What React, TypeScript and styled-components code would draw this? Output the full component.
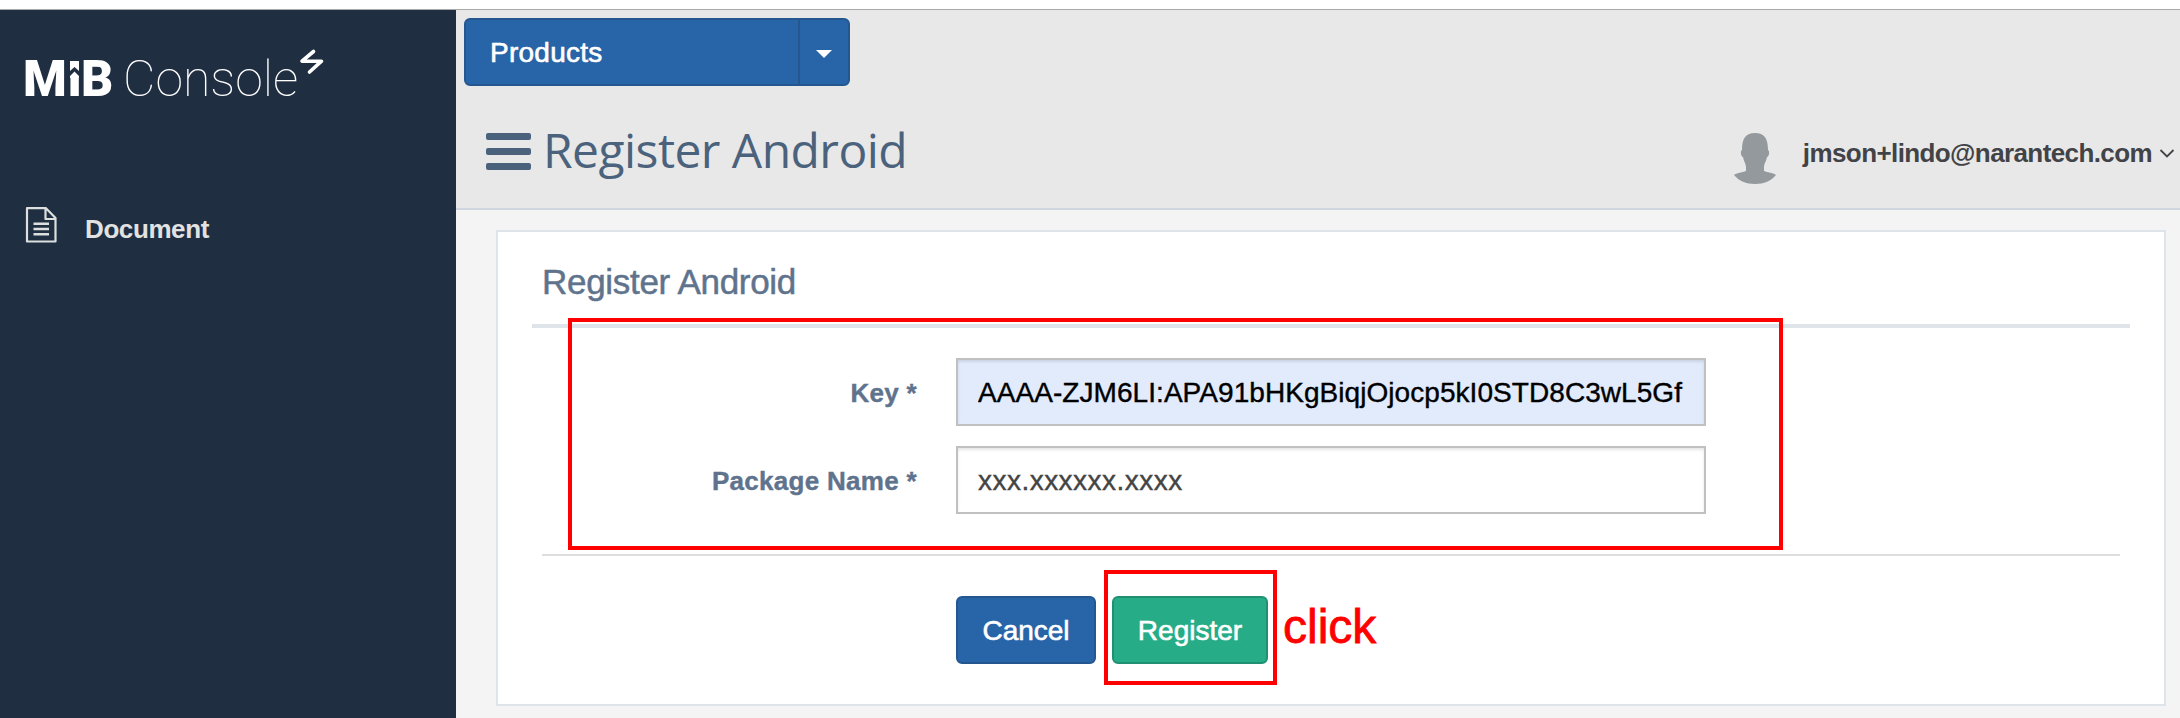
import React from 'react';
import styled, { createGlobalStyle, css } from 'styled-components';

const GlobalStyle = createGlobalStyle`
  * { box-sizing: border-box; }
  body {
    margin: 0;
    background: #fff;
    font-family: "Liberation Sans", Arial, sans-serif;
  }
`;

const Page = styled.div`
  height: 718px;
  display: flex;
  flex-direction: column;
  overflow: hidden;
`;
const BrowserEdge = styled.div`
  flex: none;
  height: 10px;
  border-bottom: 1px solid #a9a9a9;
`;
const Shell = styled.div`
  flex: 1;
  display: flex;
  min-height: 0;
`;

const Sidebar = styled.aside`
  width: 456px;
  background: #1f2e41;
  padding: 38px 0 0 23px;
`;
const Brand = styled.div`
  display: flex;
  align-items: flex-start;
  height: 159px;
  color: #fff;
  font-family: Roboto, sans-serif;
  font-size: 50px;
  line-height: 59px;
  white-space: nowrap;
`;
const BrandBold = styled.span`
  display: flex;
  width: 100px;
  padding-top: 2px;
  font-weight: 900;
`;
const BrandInitial = styled.span`
  width: 46px;
`;
const BrandArrowLetter = styled.span`
  position: relative;
  display: flex;
  justify-content: center;
  width: 11px;
`;
const ArrowCap = styled.svg`
  position: absolute;
  left: -1px;
  top: 8px;
`;
const BrandLast = styled.span`
  margin-left: 1px;
`;
const BrandThin = styled.span`
  width: 175px;
  padding-top: 2px;
  font-weight: 100;
`;
const NavItem = styled.a`
  display: flex;
  align-items: flex-start;
  gap: 28px;
  margin-left: 2px;
  color: #e2e2e2;
  font-size: 26px;
  font-weight: 700;
  line-height: 30px;
  letter-spacing: -0.4px;
`;
const NavText = styled.span`
  padding-top: 7px;
`;

const Main = styled.main`
  flex: 1;
  background: #f4f4f4;
`;
const Header = styled.header`
  height: 200px;
  padding: 8px 0 0 8px;
  background: #e8e8e8;
  border-bottom: 2px solid #d0d6df;
`;

const buttonBase = css`
  height: 68px;
  border: 2px solid #24568f;
  background: #2864a8;
  color: #fff;
  font-family: inherit;
  font-size: 28px;
  line-height: 32px;
  -webkit-text-stroke: 0.6px #fff;
`;
const SplitButton = styled.div`
  display: flex;
`;
const SplitLabel = styled.button`
  ${buttonBase}
  width: 336px;
  padding: 2px 0 0 24px;
  text-align: left;
  letter-spacing: 0.25px;
  border-radius: 6px 0 0 6px;
`;
const SplitToggle = styled.button`
  ${buttonBase}
  width: 52px;
  margin-left: -2px;
  padding: 0;
  display: flex;
  align-items: center;
  justify-content: center;
  border-radius: 0 6px 6px 0;
`;
const Caret = styled.span`
  margin-top: 3px;
  border: 8px solid transparent;
  border-top-color: #fff;
  border-bottom: 0;
`;

const TitleBar = styled.div`
  display: flex;
  justify-content: space-between;
  padding: 32px 5px 0 22px;
`;
const TitleGroup = styled.div`
  display: flex;
`;
const MenuBars = styled.div`
  display: flex;
  flex-direction: column;
  gap: 8px;
  width: 45px;
  margin: 15px 12px 0 0;
`;
const Bar = styled.i`
  height: 7px;
  border-radius: 2px;
  background: #4b627d;
`;
const PageTitle = styled.h1`
  margin: -1px 0 0;
  color: #4b627d;
  font-family: "Open Sans", sans-serif;
  font-size: 48px;
  font-weight: 400;
  line-height: 66px;
  letter-spacing: -0.55px;
`;
const User = styled.div`
  display: flex;
  align-items: flex-start;
  color: #424347;
  font-size: 26px;
  font-weight: 700;
  line-height: 30px;
  letter-spacing: -0.6px;
`;
const Email = styled.span`
  margin: 20px 7px 0 27px;
`;
const Chevron = styled.svg`
  margin-top: 30px;
`;
const Avatar = styled.svg`
  margin-top: 15px;
`;

const Card = styled.section`
  position: relative;
  width: 1670px;
  height: 476px;
  margin: 20px 0 0 40px;
  border: 2px solid #dfe3ea;
  background: #fff;
  padding: 0 34px;
`;
const CardTitle = styled.h2`
  height: 96px;
  margin: 0;
  padding: 30px 0 0 10px;
  border-bottom: 4px solid #dfe3ea;
  color: #60738d;
  font-size: 35px;
  font-weight: 400;
  line-height: 40px;
  letter-spacing: -0.3px;
  -webkit-text-stroke: 0.5px #60738d;
`;
const Form = styled.form`
  display: flex;
  flex-direction: column;
  gap: 20px;
  margin: 0 10px;
  padding: 30px 0 40px;
  border-bottom: 2px solid #dedede;
`;
const Field = styled.label`
  display: flex;
  align-items: center;
`;
const FieldLabel = styled.span`
  width: 375px;
  margin-right: 39px;
  padding-top: 2px;
  text-align: right;
  color: #60738d;
  font-size: 26px;
  font-weight: 700;
  letter-spacing: 0.3px;
  -webkit-text-stroke: 0.4px #60738d;
`;
const Input = styled.input<{ $autofilled?: boolean }>`
  width: 750px;
  height: 68px;
  padding: 2px 20px 0;
  border: 2px solid #c0c0c0;
  border-radius: 0;
  outline: 0;
  background: ${(p) => (p.$autofilled ? '#e2ebfc' : '#fff')};
  color: ${(p) => (p.$autofilled ? '#000' : '#444')};
  box-shadow: inset 0 2px 3px rgba(0, 0, 0, 0.1);
  font-family: inherit;
  font-size: 28px;
  letter-spacing: ${(p) => (p.$autofilled ? 0.06 : 0.47)}px;
  -webkit-text-stroke: 0.4px;
`;
const Actions = styled.div`
  display: flex;
  gap: 16px;
  padding: 40px 0 0 424px;
`;
const Button = styled.button<{ $primary?: boolean }>`
  ${buttonBase}
  width: ${(p) => (p.$primary ? 156 : 140)}px;
  padding: 2px 0 0;
  border-radius: 6px;
  ${(p) =>
    p.$primary &&
    css`
      background: #26ad88;
      border-color: #1f9172;
    `}
`;

const Outline = styled.div<{ $x: number; $y: number; $w: number; $h: number }>`
  position: absolute;
  left: ${(p) => p.$x}px;
  top: ${(p) => p.$y}px;
  width: ${(p) => p.$w}px;
  height: ${(p) => p.$h}px;
  border: 4px solid #ff0000;
  pointer-events: none;
`;
const ClickNote = styled.span`
  position: absolute;
  left: 785px;
  top: 367px;
  color: #ff0000;
  font-size: 48px;
  line-height: 56px;
  -webkit-text-stroke: 0.8px #ff0000;
`;

export default function App() {
  return (
    <Page>
      <GlobalStyle />
      <BrowserEdge />
      <Shell>
        <Sidebar>
          <Brand>
            <BrandBold>
              <BrandInitial>M</BrandInitial>
              <BrandArrowLetter>
                i
                <ArrowCap width="13" height="20" viewBox="0 0 13 20">
                  <path d="M0 0 H13 V20 H0 Z" fill="#1f2e41" />
                  <path d="M2 3 H11 V13 L6.500 9 L2 13 Z M6.500 13.500 L11 18 V20 H2 V18 Z" fill="#fff" />
                </ArrowCap>
              </BrandArrowLetter>
              <BrandLast>B</BrandLast>
            </BrandBold>
            <BrandThin>Console</BrandThin>
            <svg width="28" height="28" viewBox="0 0 28 28">
              <path
                d="M15.500 3.500 L4 13.200 H23.500 L11.500 24"
                fill="none"
                stroke="#fff"
                strokeWidth="3.6"
                strokeLinecap="round"
                strokeLinejoin="round"
              />
            </svg>
          </Brand>
          <NavItem>
            <svg width="32" height="36" viewBox="0 0 32 36" fill="none" stroke="#dcdfde" strokeWidth="2.200">
              <path d="M3 1.200 H21 L30.500 11 V34.500 H2 V1.200 Z M20.500 1.200 V12 H30.500" strokeLinejoin="round" />
              <path d="M8.500 16.800 H24 M8.500 22 H24 M8.500 27.200 H24" strokeWidth="2.400" />
            </svg>
            <NavText>Document</NavText>
          </NavItem>
        </Sidebar>
        <Main>
          <Header>
            <SplitButton>
              <SplitLabel>Products</SplitLabel>
              <SplitToggle aria-label="Toggle products">
                <Caret />
              </SplitToggle>
            </SplitButton>
            <TitleBar>
              <TitleGroup>
                <MenuBars>
                  <Bar />
                  <Bar />
                  <Bar />
                </MenuBars>
                <PageTitle>Register Android</PageTitle>
              </TitleGroup>
              <User>
                <Avatar width="42" height="51" viewBox="0 0 42 51">
                  <path
                    d="M21 0 C30 0 34 5 34 17 C36 18 35 24 33 24 C32 29 30 31 30 34 V38 C34 40 38 39 42 42 C37 48 30 51 21 51 C12 51 5 48 0 42 C4 39 8 40 12 38 V34 C12 31 10 29 9 24 C7 24 6 18 8 17 C8 5 12 0 21 0 Z"
                    fill="#93999c"
                  />
                </Avatar>
                <Email>jmson+lindo@narantech.com</Email>
                <Chevron width="16" height="12" viewBox="0 0 16 12">
                  <path d="M1.500 2 L8 8.500 L14.500 2" fill="none" stroke="#424347" strokeWidth="1.8" />
                </Chevron>
              </User>
            </TitleBar>
          </Header>
          <Card>
            <CardTitle>Register Android</CardTitle>
            <Form>
              <Field>
                <FieldLabel>Key *</FieldLabel>
                <Input $autofilled readOnly value="AAAA-ZJM6LI:APA91bHKgBiqjOjocp5kI0STD8C3wL5Gf" />
              </Field>
              <Field>
                <FieldLabel>Package Name *</FieldLabel>
                <Input readOnly value="xxx.xxxxxx.xxxx" />
              </Field>
            </Form>
            <Actions>
              <Button>Cancel</Button>
              <Button $primary>Register</Button>
            </Actions>
            <Outline $x={70} $y={86} $w={1215} $h={232} />
            <Outline $x={606} $y={338} $w={173} $h={115} />
            <ClickNote>click</ClickNote>
          </Card>
        </Main>
      </Shell>
    </Page>
  );
}
